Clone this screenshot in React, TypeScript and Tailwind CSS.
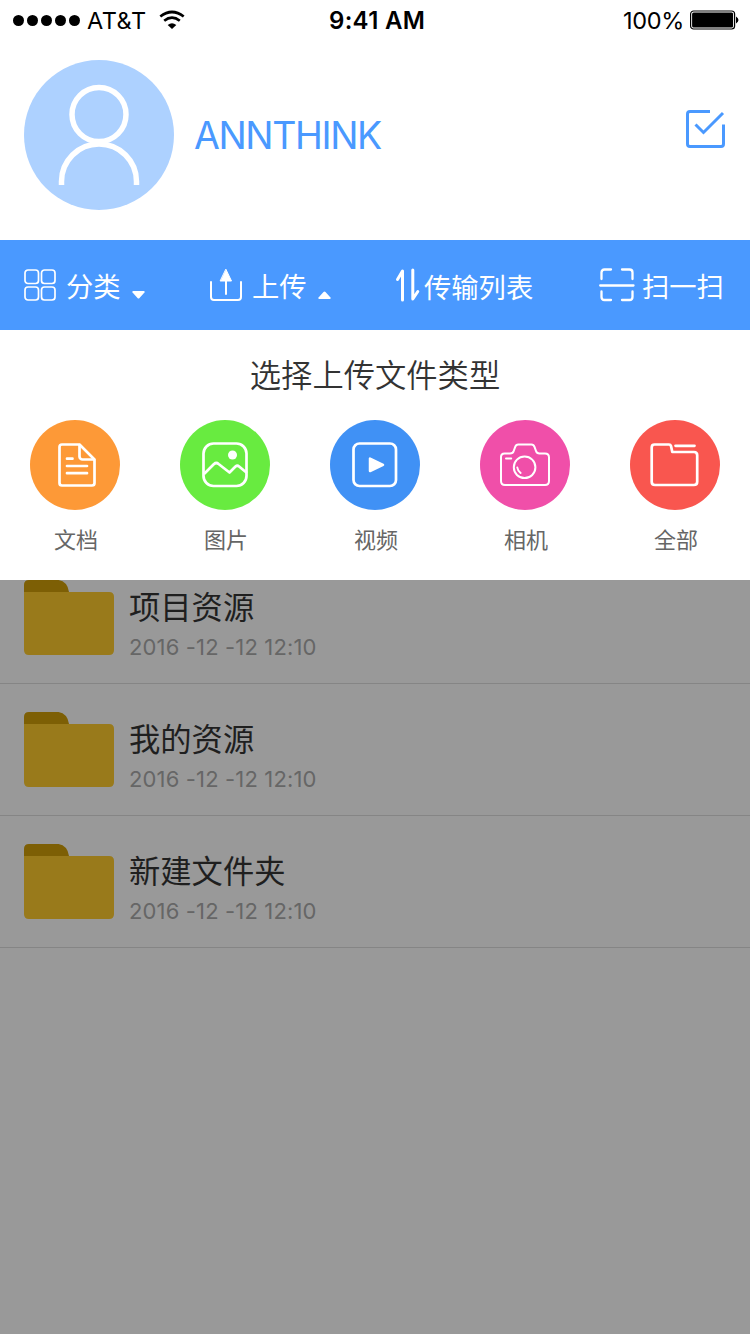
import React from 'react';

interface FileType {
  label: string;
  color: string;
  icon: React.ReactNode;
}

interface Folder {
  name: string;
  date: string;
}

const FILE_TYPES: FileType[] = [
  {
    label: '文档',
    color: 'bg-[#fd9937]',
    icon: (
      <>
        <path d="M32 24.500H49.500L64.500 39.500V63a2.500 2.500 0 0 1-2.500 2.500H32a2.500 2.500 0 0 1-2.500-2.500V27a2.500 2.500 0 0 1 2.500-2.500Z" />
        <path d="M49.500 25v11.500a3 3 0 0 0 3 3h11.500M37 38.700h5.500M37 46h20M37 53.200h20" />
      </>
    ),
  },
  {
    label: '图片',
    color: 'bg-[#68eb40]',
    icon: (
      <>
        <rect x="23.500" y="23.500" width="43" height="42.500" rx="10" />
        <path d="m24 54 10-10q2.300-2 4.600 0L49.500 52.500l6-6q1.800-1.500 3.600 0L67 53" strokeLinecap="butt" />
        <circle cx="52.500" cy="35" r="4.500" fill="white" stroke="none" />
      </>
    ),
  },
  {
    label: '视频',
    color: 'bg-[#4091f5]',
    icon: (
      <>
        <rect x="23.500" y="23.500" width="42.500" height="42.500" rx="6" />
        <path d="M40 38.500v12.500L53 44.800Z" fill="white" strokeWidth="2.500" />
      </>
    ),
  },
  {
    label: '相机',
    color: 'bg-[#f04fa9]',
    icon: (
      <g strokeWidth="2">
        <path d="M24.500 33.500H30q3 0 3.700-2.500l1.500-4.200q.8-2.300 3-2.300h13.300q2.200 0 3 2.300l1.500 4.200q.8 2.500 3.500 2.500H65q4 0 4 4V61q0 4-4 4H25q-4 0-4-4V37q0-3.500 3.500-3.500Z" />
        <circle cx="44.600" cy="47.300" r="10.800" />
        <path d="M26 38.400h5.200M37.300 47.500q.4 3.300 3.300 5.500" />
      </g>
    ),
  },
  {
    label: '全部',
    color: 'bg-[#f9564f]',
    icon: (
      <>
        <path d="M24.500 24.500h14.500q1.500 0 2 1.500l1.300 6H64q3.200 0 3.200 3.200v26.500q0 3.300-3.300 3.300H25q-3.300 0-3.300-3.300V27.500q0-3 2.800-3Z" />
        <path d="M45.500 25.800h19" />
      </>
    ),
  },
];

const FOLDERS: Folder[] = [
  { name: '项目资源', date: '2016 -12 -12 12:10' },
  { name: '我的资源', date: '2016 -12 -12 12:10' },
  { name: '新建文件夹', date: '2016 -12 -12 12:10' },
];

const StatusBar: React.FC = () => (
  <div className="flex h-10 items-center justify-between pl-[13px] pr-[11px] text-2xl leading-10 text-black">
    <div className="flex w-[316px] items-center">
      <div className="flex gap-[3px]">
        {[0, 1, 2, 3, 4].map((dot) => (
          <span key={dot} className="h-[11px] w-[11px] rounded-full bg-black" />
        ))}
      </div>
      <span className="ml-[7px] w-[60px] pt-[2px] whitespace-nowrap text-[23.500px] tracking-[0.5px]">AT&amp;T</span>
      <svg className="ml-[12px]" width="26" height="20" viewBox="0 0 26 20" fill="none" stroke="black" strokeWidth="2.700">
        <path d="M1.300 6.500q11.700-9 23.400 0M5.200 10.800q7.800-6.300 15.600 0" />
        <path d="M13 19l-4.300-4q4.300-3.400 8.600 0Z" fill="black" stroke="none" />
      </svg>
    </div>
    <span className="pt-[2px] whitespace-nowrap font-semibold tracking-[0.3px]">9:41 AM</span>
    <div className="flex flex-1 items-center justify-end">
      <span className="mr-[6px] pt-[2px] text-[23.500px] tracking-[-0.3px]">100%</span>
      <svg width="49" height="20" viewBox="0 0 49 20">
        <rect x="0.600" y="1" width="44" height="18" rx="3" fill="none" stroke="black" strokeWidth="1.200" />
        <rect x="2.100" y="2.500" width="41" height="15" rx="1.500" />
        <path d="M46 6.500q5 3.500 0 7Z" />
      </svg>
    </div>
  </div>
);

const Profile: React.FC = () => (
  <div className="flex h-[200px] items-start px-6 pt-5">
    <svg width="150" height="150" viewBox="0 0 150 150" fill="none" stroke="white" strokeWidth="5.500">
      <circle cx="75" cy="75" r="75" fill="#add1ff" stroke="none" />
      <circle cx="75" cy="54.500" r="27" />
      <path d="M37.500 125v-3.500a37.500 37.500 0 0 1 75 0v3.500" />
    </svg>
    <span className="ml-5 whitespace-nowrap text-[37.500px] leading-[152px] tracking-[-1.400px] text-[#4a99ff]">ANNTHINK</span>
    <svg className="mt-[50px] mr-px ml-auto" width="40" height="38" viewBox="0 0 40 38" fill="none" stroke="#4a99ff" strokeWidth="3">
      <path d="M25 1.500H5Q2.500 1.500 2.500 4v30q0 2.500 2.500 2.500h31q2.500 0 2.500-2.500V14.500" />
      <path d="m10.500 14.500 8 8L38 3" />
    </svg>
  </div>
);

const Toolbar: React.FC = () => (
  <div className="flex h-[90px] items-center bg-[#4a99ff] pl-6 text-[27.300px] leading-10 whitespace-nowrap text-white">
    <div className="flex w-[186px] items-center">
      <svg width="32" height="32" viewBox="0 0 32 32" fill="none" stroke="white" strokeWidth="1.700">
        <rect x="1" y="1" width="13.500" height="13.500" rx="3" />
        <rect x="17.500" y="1" width="13.500" height="13.500" rx="3" />
        <rect x="1" y="18" width="13.500" height="13" rx="3" />
        <rect x="17.500" y="18" width="13.500" height="13" rx="3" />
      </svg>
      <span className="ml-[10px] pt-[6px]">分类</span>
      <svg className="mt-[20px] ml-[11px]" width="13" height="8" viewBox="0 0 13 8" fill="white">
        <path d="M1 0h11q1.500 1 0 2L7.500 7q-1 1-2 0L1 2Q-.5 1 1 0Z" />
      </svg>
    </div>
    <div className="flex w-[185px] items-center">
      <svg width="32" height="34" viewBox="0 0 32 34" fill="none" stroke="white" strokeWidth="2" strokeLinecap="round">
        <path d="M1 14v15q0 3 3 3h24q3 0 3-3V14M16 26V12" />
        <path d="M16 1.500 21.500 13h-11Z" fill="white" strokeWidth="1" strokeLinejoin="round" />
      </svg>
      <span className="ml-[10px] pt-[6px]">上传</span>
      <svg className="mt-[19px] ml-[11px]" width="13" height="8" viewBox="0 0 13 8" fill="white">
        <path d="M1 8h11q1.500-1 0-2L7.500 1q-1-1-2 0L1 6q-1.500 1 0 2Z" />
      </svg>
    </div>
    <div className="flex w-[204px] items-center">
      <svg width="25" height="34" viewBox="0 0 25 34" fill="none" stroke="white" strokeWidth="3" strokeLinecap="round" strokeLinejoin="round">
        <path d="M2.500 11.500 7.500 3v29M17.800 2v29l5-7.500" />
      </svg>
      <span className="ml-[4px] pt-[8px]">传输列表</span>
    </div>
    <div className="flex items-center">
      <svg width="36" height="34" viewBox="0 0 36 34" fill="none" stroke="white" strokeWidth="2.300" strokeLinecap="round">
        <path d="M2.500 11V4.500q0-3 3-3H12M23 1.500h7.500q3 0 3 3V11M2.500 23.500V29q0 3 3 3H12M23 32h7.500q3 0 3-3v-5.500M1.200 17.500h33.300" />
      </svg>
      <span className="ml-[7px] pt-[6px]">扫一扫</span>
    </div>
  </div>
);

const UploadPanel: React.FC = () => (
  <div className="h-[250px] bg-white">
    <h2 className="h-[90px] text-center text-[31.300px] leading-[93px] font-[350] text-[#333]">选择上传文件类型</h2>
    <div className="flex justify-between px-[30px]">
      {FILE_TYPES.map((type) => (
        <div key={type.label} className="flex w-[90px] flex-col items-center">
          <div className={`h-[90px] w-[90px] rounded-full ${type.color}`}>
            <svg width="90" height="90" viewBox="0 0 90 90" fill="none" stroke="white" strokeWidth="2.700" strokeLinecap="round" strokeLinejoin="round">
              {type.icon}
            </svg>
          </div>
          <span className="ml-[2px] text-[22px] leading-[60px] text-[#666]">{type.label}</span>
        </div>
      ))}
    </div>
  </div>
);

const FolderRow: React.FC<{ folder: Folder; first: boolean }> = ({ folder, first }) => (
  <div className={`flex border-b border-[#858585] px-6 ${first ? 'h-[104px]' : 'h-[132px] pt-7'}`}>
    <svg width="90" height="75" viewBox="0 0 90 75">
      <path d="M0 14V5q0-5 5-5h29.500q9 1.500 10.500 12v2Z" fill="#7d5f05" />
      <path d="M0 12h85q5 0 5 5v53q0 5-5 5H5q-5 0-5-5Z" fill="#997a1b" />
    </svg>
    <div className="ml-[15px] flex flex-col whitespace-nowrap">
      <span className="h-[52px] text-[31.300px] leading-[56px] text-[#1f1f1f]">{folder.name}</span>
      <span className="text-[22px] leading-[30px] tracking-[0.150px] text-[#666]">{folder.date}</span>
    </div>
  </div>
);

const App: React.FC = () => {
  return (
    <div className="h-[1334px] w-[750px] overflow-hidden bg-white font-[Inter,'Noto_Sans_CJK_SC',sans-serif]">
      <StatusBar />
      <Profile />
      <Toolbar />
      <UploadPanel />
      <div className="h-[754px] bg-[#999]">
        {FOLDERS.map((folder, index) => (
          <FolderRow key={folder.name} folder={folder} first={index === 0} />
        ))}
      </div>
    </div>
  );
};

export default App;
